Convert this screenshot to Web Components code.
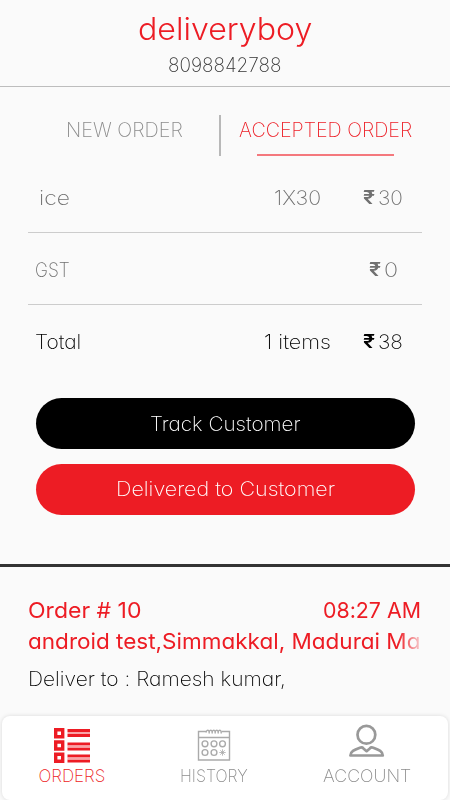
<!DOCTYPE html>
<html lang="en">
<head>
<meta charset="utf-8">
<title>Delivery orders</title>
<style>
html,body{margin:0;height:100%;overflow:hidden;background:#fafafa}
body{font-family:Inter,"Open Sans","Liberation Sans",sans-serif;font-weight:250}
</style>
</head>
<body>
<delivery-app></delivery-app>
<script>
// Single line of text stretched to the width given in its "w" attribute.
class TextRun extends HTMLElement{
  connectedCallback(){
    const w=+this.getAttribute('w');
    this.attachShadow({mode:'open'}).innerHTML=`<style>
      :host{display:block;flex:none;width:${w}px;height:1.2em;line-height:1.2em;white-space:pre;font-feature-settings:"cv11","calt" 0}
      span{display:inline-block;transform-origin:0 50%}
    </style><span><slot></slot></span>`;
    const s=this.shadowRoot.querySelector('span');
    s.style.transform=`scaleX(${w/s.offsetWidth})`;
  }
}
class AppHeader extends HTMLElement{
  connectedCallback(){
    this.attachShadow({mode:'open'}).innerHTML=`<style>
      :host{display:flex;flex-direction:column;align-items:center;box-sizing:border-box;height:87px;padding-top:10px;border-bottom:1px solid #bdbdbd}
      .name{font-size:31px;color:#ed1c24;font-weight:300}
      .phone{font-size:20px;color:#333;margin-top:6px}
    </style><text-run class="name" w="174"><slot name="name"></slot></text-run>
    <text-run class="phone" w="114"><slot name="phone"></slot></text-run>`;
  }
}
class OrderTabs extends HTMLElement{
  connectedCallback(){
    this.attachShadow({mode:'open'}).innerHTML=`<style>
      :host{display:grid;grid-template-columns:219px 2px 1fr;height:74px;box-sizing:border-box;padding-top:28px;font-size:20px}
      .rule{background:#b8b8b8;height:41px}
      .new{color:#8c8c8c;padding:3px 0 0 66px}
      .on{color:#ed1c24;padding:3px 0 0 18px}
      .bar{width:137px;height:2px;background:#f4787d;margin:12px 0 0 18px}
    </style><div class="new"><text-run w="117">NEW ORDER</text-run></div><div class="rule"></div>
    <div class="on"><text-run w="173">ACCEPTED ORDER</text-run><div class="bar"></div></div>`;
  }
}
class BillRow extends HTMLElement{
  connectedCallback(){
    this.attachShadow({mode:'open'}).innerHTML=`<style>
      :host{display:grid;grid-template-columns:1fr auto 91px;align-items:center;height:72px;box-sizing:border-box;margin:0 28px;padding-top:2px;border-bottom:1px solid #ccc;color:#707070;font-size:20px}
      :host([total]){color:#000;border:0}
      .l{padding-left:7px}
      :host([indent]) .l{padding-left:11px}
      :host([indent]) .q{padding-right:10px}
      .p{display:flex;justify-content:center;gap:3px;padding-left:13px}
      .p text-run:first-child{font-weight:600;font-size:18px;line-height:24px}
    </style><div class="l"><text-run w="${this.getAttribute('lw')}">${this.getAttribute('label')}</text-run></div>
    <div class="q">${this.hasAttribute('qty')?`<text-run w="${this.getAttribute('qw')}">${this.getAttribute('qty')}</text-run>`:''}</div>
    <div class="p"><text-run w="12">₹</text-run><text-run w="${this.getAttribute('pw')}">${this.getAttribute('price')}</text-run></div>`;
  }
}
class PillButton extends HTMLElement{
  connectedCallback(){
    this.attachShadow({mode:'open'}).innerHTML=`<style>
      :host{display:flex;align-items:center;justify-content:center;height:51px;border-radius:26px;color:#fff;font-size:20px;background:var(--fill)}
    </style><text-run w="${this.getAttribute('tw')}"><slot></slot></text-run>`;
  }
}
class NextOrder extends HTMLElement{
  connectedCallback(){
    this.attachShadow({mode:'open'}).innerHTML=`<style>
      :host{display:block;height:151px;border-top:3px solid #333;box-sizing:border-box;padding:30px 29px 0 28px;overflow:hidden}
      .top{display:flex;justify-content:space-between}
      .red{color:#ed1c24;font-size:22px;font-weight:400}
      .addr{margin-top:5px;overflow:hidden;-webkit-mask:linear-gradient(90deg,#000 370px,transparent 398px)}
      .to{margin-top:12px;font-size:20px}
    </style><div class="top red"><text-run w="113">Order # 10</text-run><text-run w="98">08:27 AM</text-run></div>
    <div class="addr red"><text-run w="393">android test,Simmakkal, Madurai Ma</text-run></div>
    <div class="to"><text-run w="258">Deliver to : Ramesh kumar,</text-run></div>`;
  }
}
class NavItem extends HTMLElement{
  connectedCallback(){
    this.attachShadow({mode:'open'}).innerHTML=`<style>
      :host{display:flex;flex-direction:column;align-items:center;color:#8c8c8c;font-size:17px}
      :host([active]){color:#ed1c24}
      .icon{height:50px}
    </style><div class="icon"><slot name="icon"></slot></div><text-run w="${this.getAttribute('tw')}"><slot></slot></text-run>`;
  }
}
class BottomNav extends HTMLElement{
  connectedCallback(){
    this.attachShadow({mode:'open'}).innerHTML=`<style>
      :host{display:grid;grid-template-columns:140px 144px 162px;height:84px;margin:1px 2px 0;background:#fff;border-radius:8px;box-shadow:0 0 4px #0002}
      svg{display:block;width:40px;height:50px}
    </style>
    <nav-item active tw="67">ORDERS<svg slot="icon" viewBox="0 0 40 50"><g fill="none" stroke="currentColor" stroke-width="3.4"><path d="M3.700 13.700h7v7h-7zM3.700 26h7v7h-7zM3.700 38.300h7v7h-7z"/></g><path fill="currentColor" d="M15.500 13h22.500v3h-22.500zM15.500 18h22.500v3h-22.500zM15.500 26.500h22.500v3h-22.500zM15.500 31.500h22.500v3h-22.500zM15.500 38.500h22.500v3h-22.500zM15.500 43.500h22.500v3h-22.500z"/><path fill="#f9a4a7" d="M15.500 16h22.500v2h-22.500zM15.500 29.500h22.500v2h-22.500zM15.500 41.500h22.500v2h-22.500z"/></svg></nav-item>
    <nav-item tw="68">HISTORY<svg slot="icon" viewBox="0 0 40 50"><g fill="none" stroke="#aaa" stroke-width="1.400"><path d="M12 15.500H4.500v28.500h31V15.500H28M4.500 21.500h31"/><path d="M12 16.500c1-4 4-2 3 1m0-1c1-4 4-2 3 1m0-1c1-4 4-2 3 1m0-1c1-4 4-2 3 1m0-1c1-4 4-2 3 1"/><circle cx="11" cy="27.800" r="2.900"/><circle cx="20" cy="27.800" r="2.900"/><circle cx="28.500" cy="27.800" r="2.900"/><circle cx="11" cy="36.500" r="2.900"/><circle cx="20" cy="36.500" r="2.900"/><path stroke-width=".8" d="M28.500 33.300v6.400M25.300 36.500h6.400M26.300 34.300l4.400 4.400M30.700 34.300l-4.400 4.400"/></g></svg></nav-item>
    <nav-item tw="88">ACCOUNT<svg slot="icon" viewBox="0 0 40 50"><g transform="translate(-.6 0)" fill="none" stroke="#999" stroke-width="2.700" stroke-linejoin="round"><circle cx="20" cy="18.800" r="8.900"/><path d="M4 39.500c.2-4 3.500-5.600 9.500-7.800 1.600-.5 2.500-.5 3.500.7l3.200 2.800 3.200-2.800c1-1.200 2-1.200 3.500-.7 6 2.200 9.300 3.800 9.500 7.800z"/></g></svg></nav-item>`;
  }
}
class DeliveryApp extends HTMLElement{
  connectedCallback(){
    this.attachShadow({mode:'open'}).innerHTML=`<style>
      :host{display:block;width:450px;height:800px;overflow:hidden;background:#fafafa}
      .actions{display:grid;gap:14.500px;padding:21px 35.500px 49px;height:117px}
    </style>
    <app-header><span slot="name">deliveryboy</span><span slot="phone">8098842788</span></app-header>
    <order-tabs></order-tabs>
    <bill-row indent label="ice" lw="31" qty="1X30" qw="47" price="30" pw="25"></bill-row>
    <bill-row label="GST" lw="35" price="0" pw="14"></bill-row>
    <bill-row total label="Total" lw="46" qty="1 items" qw="67" price="38" pw="25"></bill-row>
    <div class="actions"><pill-button tw="151" style="--fill:#000">Track Customer</pill-button><pill-button tw="219" style="--fill:#ed1c24">Delivered to Customer</pill-button></div>
    <next-order></next-order>
    <bottom-nav></bottom-nav>`;
  }
}
customElements.define('text-run',TextRun);
customElements.define('app-header',AppHeader);
customElements.define('order-tabs',OrderTabs);
customElements.define('bill-row',BillRow);
customElements.define('pill-button',PillButton);
customElements.define('next-order',NextOrder);
customElements.define('nav-item',NavItem);
customElements.define('bottom-nav',BottomNav);
customElements.define('delivery-app',DeliveryApp);
</script>
</body>
</html>
